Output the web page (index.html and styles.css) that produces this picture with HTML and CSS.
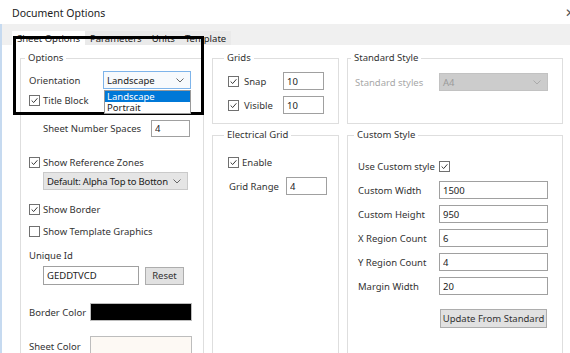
FILE: index.html
```html
<!DOCTYPE html>
<html lang="en">

<head>
    <meta charset="UTF-8">
    <title>Document Options</title>
    <link rel="stylesheet" href="styles.css">
</head>

<body>
    <div class="window">
        <div class="titlebar">
            <span class="title">Document Options</span>
            <span class="close">✕</span>
        </div>

        <div class="main">
            <div class="tabs">
                <span class="tab active">Sheet Options</span>
                <span class="tab">Parameters</span>
                <span class="tab">Units</span>
                <span class="tab">Template</span>
            </div>

            <div class="content">
                <!-- left column -->
                <fieldset class="group options">
                    <legend>Options</legend>

                    <div class="row orient-row">
                        <span class="label orient-label">Orientation</span>
                        <div class="select-wrap">
                            <div class="select focused">
                                <span>Landscape</span>
                                <svg class="chev" width="8" height="5" viewBox="0 0 8 5"><path d="M0.5 0.5 L4 4 L7.5 0.5" fill="none" stroke="#666" stroke-width="1"/></svg>
                            </div>
                            <div class="dropdown">
                                <div class="option selected">Landscape</div>
                                <div class="option">Portrait</div>
                            </div>
                        </div>
                    </div>

                    <div class="row check-row title-row">
                        <span class="check on"><svg viewBox="0 0 11 11"><path d="M2 5.5 L4.5 8 L9 2.8" fill="none" stroke="#333" stroke-width="1.2"/></svg></span>
                        <span>Title Block</span>
                    </div>

                    <div class="row indent sheetnum-row">
                        <span class="label sheetnum-label">Sheet Number Spaces</span>
                        <input class="input small-input" value="4">
                    </div>

                    <div class="row check-row zones-row">
                        <span class="check on"><svg viewBox="0 0 11 11"><path d="M2 5.5 L4.5 8 L9 2.8" fill="none" stroke="#333" stroke-width="1.2"/></svg></span>
                        <span>Show Reference Zones</span>
                    </div>

                    <div class="row indent zonesel-row">
                        <div class="select grey zone-select">
                            <span class="select-text">Default: Alpha Top to Botton</span>
                            <svg class="chev" width="8" height="5" viewBox="0 0 8 5"><path d="M0.5 0.5 L4 4 L7.5 0.5" fill="none" stroke="#666" stroke-width="1"/></svg>
                        </div>
                    </div>

                    <div class="row check-row border-row">
                        <span class="check on"><svg viewBox="0 0 11 11"><path d="M2 5.5 L4.5 8 L9 2.8" fill="none" stroke="#333" stroke-width="1.2"/></svg></span>
                        <span>Show Border</span>
                    </div>

                    <div class="row check-row tmpl-row">
                        <span class="check"></span>
                        <span>Show Template Graphics</span>
                    </div>

                    <div class="row uidlabel-row">
                        <span>Unique Id</span>
                    </div>

                    <div class="row indent uid-row">
                        <input class="input uid-input" value="GEDDTVCD">
                        <button class="btn reset-btn">Reset</button>
                    </div>

                    <div class="row bcolor-row">
                        <span class="label color-label">Border Color</span>
                        <span class="swatch black"></span>
                    </div>

                    <div class="row scolor-row">
                        <span class="label color-label">Sheet Color</span>
                        <span class="swatch cream"></span>
                    </div>
                </fieldset>

                <!-- middle column -->
                <div class="col mid-col">
                    <fieldset class="group top-group grids">
                        <legend>Grids</legend>
                        <div class="row grid-row snap-row">
                            <span class="check on"><svg viewBox="0 0 11 11"><path d="M2 5.5 L4.5 8 L9 2.8" fill="none" stroke="#333" stroke-width="1.2"/></svg></span>
                            <span class="grid-label">Snap</span>
                            <input class="input grid-input" value="10">
                        </div>
                        <div class="row grid-row visible-row">
                            <span class="check on"><svg viewBox="0 0 11 11"><path d="M2 5.5 L4.5 8 L9 2.8" fill="none" stroke="#333" stroke-width="1.2"/></svg></span>
                            <span class="grid-label">Visible</span>
                            <input class="input grid-input" value="10">
                        </div>
                    </fieldset>

                    <fieldset class="group fill-group elec">
                        <legend>Electrical Grid</legend>
                        <div class="row check-row enable-row">
                            <span class="check on"><svg viewBox="0 0 11 11"><path d="M2 5.5 L4.5 8 L9 2.8" fill="none" stroke="#333" stroke-width="1.2"/></svg></span>
                            <span>Enable</span>
                        </div>
                        <div class="row range-row">
                            <span class="label range-label">Grid Range</span>
                            <input class="input grid-input" value="4">
                        </div>
                    </fieldset>
                </div>

                <!-- right column -->
                <div class="col right-col">
                    <fieldset class="group top-group standard">
                        <legend>Standard Style</legend>
                        <div class="row std-row">
                            <span class="label std-label disabled">Standard styles</span>
                            <div class="select disabled-select">
                                <span>A4</span>
                                <svg class="chev" width="8" height="5" viewBox="0 0 8 5"><path d="M0.5 0.5 L4 4 L7.5 0.5" fill="none" stroke="#aaa" stroke-width="1"/></svg>
                            </div>
                        </div>
                    </fieldset>

                    <fieldset class="group fill-group custom">
                        <legend>Custom Style</legend>
                        <div class="row custom-row use-row">
                            <span class="label custom-label">Use Custom style</span>
                            <span class="check on"><svg viewBox="0 0 11 11"><path d="M2 5.5 L4.5 8 L9 2.8" fill="none" stroke="#333" stroke-width="1.2"/></svg></span>
                        </div>
                        <div class="row custom-row">
                            <span class="label custom-label">Custom Width</span>
                            <input class="input custom-input" value="1500">
                        </div>
                        <div class="row custom-row">
                            <span class="label custom-label">Custom Height</span>
                            <input class="input custom-input" value="950">
                        </div>
                        <div class="row custom-row">
                            <span class="label custom-label">X Region Count</span>
                            <input class="input custom-input" value="6">
                        </div>
                        <div class="row custom-row">
                            <span class="label custom-label">Y Region Count</span>
                            <input class="input custom-input" value="4">
                        </div>
                        <div class="row custom-row">
                            <span class="label custom-label">Margin Width</span>
                            <input class="input custom-input" value="20">
                        </div>
                        <div class="row update-row">
                            <button class="btn update-btn">Update From Standard</button>
                        </div>
                    </fieldset>
                </div>
            </div>
        </div>

        <!-- annotation box drawn over the screenshot -->
        <div class="highlight"></div>
    </div>
</body>

</html>
```

FILE: styles.css
```css
* {
    box-sizing: border-box;
}

body {
    margin: 0;
    font-family: 'Noto Sans', 'Open Sans', sans-serif;
    font-size: 9.5px;
    color: #333;
    background: #fff;
    overflow: hidden;
}

.window {
    position: relative;
    width: 570px;
    height: 353px;
    overflow: hidden;
}

.titlebar {
    height: 24px;
    display: flex;
    justify-content: space-between;
    align-items: center;
    padding-left: 12px;
    padding-top: 1px;
}

.title {
    font-size: 10.5px;
    color: #222;
}

.close {
    font-size: 12px;
    color: #555;
    margin-right: -5px;
}

.main {
    border-left: 2px solid #c6daf0;
}

.tabs {
    height: 21px;
    background: #f0f0f0;
    display: flex;
    align-items: flex-end;
    padding-left: 10px;
}

.tab {
    height: 14px;
    line-height: 15px;
    padding: 0 5px;
    color: #222;
    background: #eaeaea;
}

.tab.active {
    background: #fff;
}

.content {
    display: flex;
    gap: 8px;
    height: 330px;
    padding: 6px 0 0 18px;
}

.col {
    display: flex;
    flex-direction: column;
    gap: 4px;
}

.mid-col {
    width: 127px;
}

.right-col {
    width: 216px;
}

.group {
    margin: 0;
    padding: 0 8px 8px 8px;
    border: 1px solid #dedede;
    min-width: 0;
}

.group legend {
    padding: 0 3px;
    margin-left: -4px;
    line-height: 14px;
    color: #333;
}

.options {
    width: 184px;
}

.top-group {
    height: 73px;
}

.fill-group {
    flex: 1;
}

.grids,
.elec {
    padding-left: 15px;
}

.standard {
    padding-left: 7px;
}

.custom {
    padding-left: 10px;
}

.row {
    display: flex;
    align-items: center;
}

.indent {
    padding-left: 14px;
}

.label {
    flex-shrink: 0;
}

.disabled {
    color: #a8a8a8;
}

/* checkbox */
.check {
    width: 11px;
    height: 11px;
    border: 1px solid #707070;
    background: #fff;
    flex-shrink: 0;
    display: flex;
}

.check svg {
    width: 9px;
    height: 9px;
}

.check-row {
    height: 14px;
    gap: 3px;
}

/* inputs */
.input {
    height: 18px;
    border: 1px solid #a0a0a0;
    padding: 0 3px;
    font: inherit;
    color: #222;
    background: #fff;
    outline: none;
}

.btn {
    height: 18px;
    border: 1px solid #adadad;
    background: #e1e1e1;
    font: inherit;
    color: #333;
    padding: 0;
}

.select {
    height: 18px;
    display: flex;
    align-items: center;
    justify-content: space-between;
    padding: 0 6px 0 3px;
    border: 1px solid #a0a0a0;
    color: #222;
}

.select-text {
    white-space: nowrap;
    overflow: hidden;
    letter-spacing: -0.2px;
}

.chev {
    flex-shrink: 0;
}

.select.focused {
    width: 88px;
    border-color: #7eb4ea;
    background: #f7fafd;
}

.select.grey {
    background: #e5e5e5;
    border-color: #cacaca;
}

.disabled-select {
    width: 109px;
    background: #cccccc;
    border-color: #c2c2c2;
    color: #9a9a9a;
}

.select-wrap {
    position: relative;
}

.dropdown {
    position: absolute;
    top: 19px;
    left: 1px;
    width: 87px;
    border: 1px solid #9a9a9a;
    background: #fff;
    z-index: 2;
}

.option {
    height: 11px;
    line-height: 11px;
    padding-left: 2px;
    color: #222;
}

.option.selected {
    background: #0078d7;
    color: #fff;
}

/* left group rows */
.orient-row {
    margin-top: 6px;
    height: 18px;
}

.orient-label {
    width: 74px;
}

.title-row {
    margin-top: 4px;
}

.sheetnum-row {
    margin-top: 13px;
    height: 17px;
}

.sheetnum-label {
    width: 108px;
}

.small-input {
    width: 39px;
    height: 17px;
}

.zones-row {
    margin-top: 18px;
}

.zonesel-row {
    margin-top: 3px;
}

.zone-select {
    width: 145px;
    gap: 4px;
}

.border-row {
    margin-top: 12px;
}

.tmpl-row {
    margin-top: 8px;
}

.uidlabel-row {
    margin-top: 10px;
    height: 14px;
}

.uid-row {
    margin-top: 4px;
    height: 19px;
    gap: 6px;
}

.uid-input {
    width: 96px;
    height: 19px;
}

.reset-btn {
    width: 39px;
}

.bcolor-row {
    margin-top: 18px;
    height: 18px;
}

.scolor-row {
    margin-top: 15px;
    height: 20px;
}

.color-label {
    width: 61px;
}

.swatch {
    width: 102px;
    height: 100%;
    border: 1px solid #bdbdbd;
}

.swatch.black {
    background: #000;
}

.swatch.cream {
    background: #fdf9f4;
}

/* middle groups */
.grid-row {
    height: 18px;
}

.snap-row {
    margin-top: 7px;
}

.visible-row {
    margin-top: 6px;
}

.grid-label {
    width: 44px;
    padding-left: 5px;
}

.grid-input {
    width: 41px;
}

.enable-row {
    margin-top: 13px;
}

.range-row {
    margin-top: 8px;
    height: 18px;
}

.range-label {
    width: 58px;
    padding-left: 1px;
}

/* right groups */
.std-row {
    margin-top: 8px;
    height: 18px;
}

.std-label {
    width: 84px;
}

.custom-row {
    height: 18px;
    margin-top: 6px;
}

.use-row {
    margin-top: 15px;
}

.custom-label {
    width: 81px;
}

.custom-input {
    width: 109px;
}

.update-row {
    margin-top: 14px;
    padding-left: 82px;
}

.update-btn {
    width: 107px;
    height: 19px;
}

.highlight {
    position: absolute;
    left: 13px;
    top: 36px;
    width: 191px;
    height: 79px;
    border: 3px solid #000;
    pointer-events: none;
}
```
